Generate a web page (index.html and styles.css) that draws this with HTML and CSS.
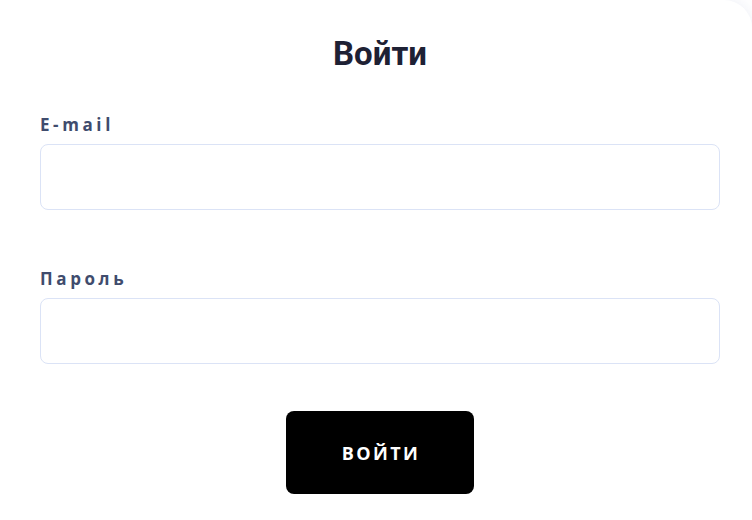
FILE: index.html
```html
<!DOCTYPE html>
<html lang="ru">
<head>
<meta charset="utf-8">
<title>Войти</title>
<link rel="stylesheet" href="styles.css">
</head>
<body>
<main class="card">
  <h1 class="title">Войти</h1>
  <form class="form">
    <div class="field">
      <label class="label" for="email">E-mail</label>
      <input class="input" id="email" type="email">
    </div>
    <div class="field">
      <label class="label" for="password">Пароль</label>
      <input class="input" id="password" type="password">
    </div>
    <div class="actions">
      <button class="btn" type="button">ВОЙТИ</button>
    </div>
  </form>
</main>
</body>
</html>
```
FILE: styles.css
```css
html, body {
  margin: 0;
  padding: 0;
  background: #ffffff;
  overflow: hidden;
}
body {
  width: 752px;
  height: 520px;
}
.card {
  box-sizing: border-box;
  width: 752px;
  height: 520px;
  padding: 34px 32px 0 40px;
  background: #ffffff;
  border-top-right-radius: 28px;
  box-shadow: 0 0 16px rgba(170, 178, 215, 0.22);
}
.title {
  margin: 0;
  text-align: center;
  font: 700 33px/40px Roboto, "Liberation Sans", sans-serif;
  color: #1e2134;
}
.form {
  margin-top: 39px;
  display: flex;
  flex-direction: column;
}
.field {
  display: flex;
  flex-direction: column;
  gap: 7px;
}
.field + .field {
  margin-top: 57px;
}
.label {
  font: 700 17px/24px "Open Sans", "Liberation Sans", sans-serif;
  letter-spacing: 3.6px;
  color: #404c6d;
}
.input {
  box-sizing: border-box;
  width: 100%;
  height: 66px;
  margin: 0;
  border: 1.5px solid #dbe3f6;
  border-radius: 8px;
  background: #ffffff;
  outline: none;
}
.actions {
  margin-top: 47px;
  display: flex;
  justify-content: center;
}
.btn {
  width: 188px;
  height: 83px;
  border: none;
  border-radius: 8px;
  background: #000000;
  color: #ffffff;
  font: 700 18px/24px "Open Sans", "Liberation Sans", sans-serif;
  letter-spacing: 2.4px;
  padding: 0 0 0 2px;
  cursor: pointer;
}
```
